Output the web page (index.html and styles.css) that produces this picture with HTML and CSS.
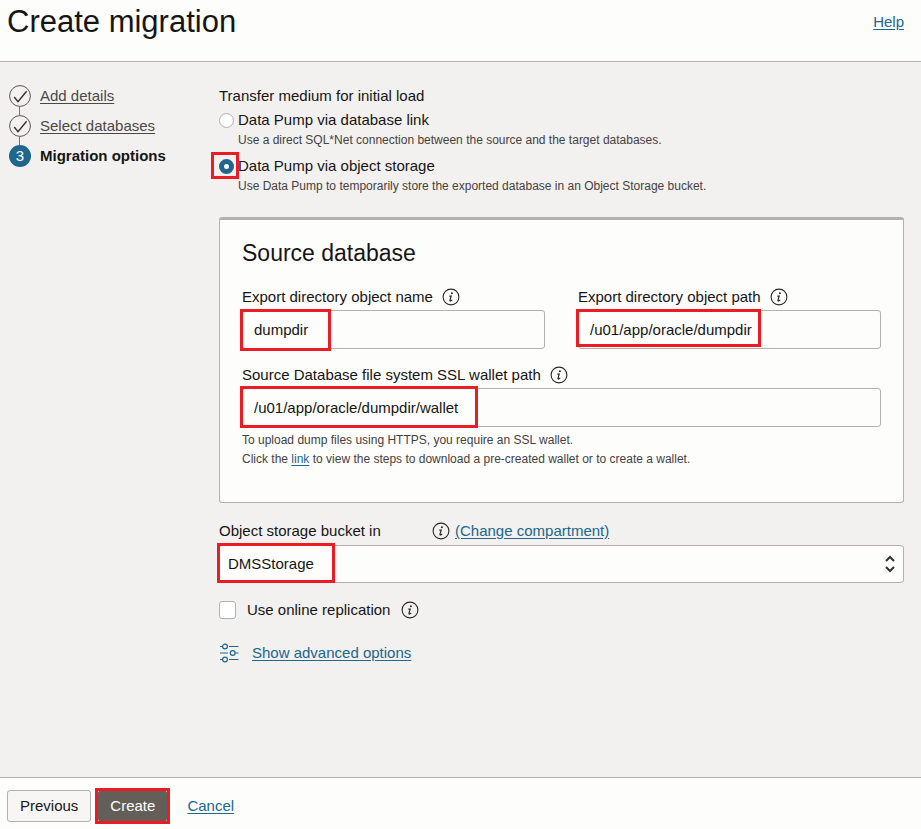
FILE: index.html
```html
<!DOCTYPE html>
<html lang="en">
<head>
<meta charset="utf-8">
<meta name="viewport" content="width=device-width, initial-scale=1">
<title>Create migration</title>
<link rel="stylesheet" href="styles.css">
</head>
<body>
<svg class="symbols" aria-hidden="true">
  <symbol id="info" viewBox="0 0 18 18">
    <circle cx="9" cy="9" r="7.9" fill="none" stroke="currentColor" stroke-width="1.1"/>
    <circle cx="9.9" cy="5.3" r="1" fill="currentColor"/>
    <path d="M7.3 8.1h1.9L8 12.2q-.2 1 .6.8l1.6-1" fill="none" stroke="currentColor" stroke-width="1.2"/>
  </symbol>
  <symbol id="check" viewBox="0 0 22 22">
    <circle cx="11" cy="11" r="10.4" fill="none" stroke="#5b5652" stroke-width="1"/>
    <path d="M5.2 12l3.8 4.6 8.6-10.4" fill="none" stroke="currentColor" stroke-width="1.4"/>
  </symbol>
</svg>
<header class="header">
  <h1 class="title">Create migration</h1>
  <a class="link" href="#">Help</a>
</header>
<main class="main">
  <nav class="steps" aria-label="Steps">
    <ol class="step-list">
      <li class="step"><svg class="step-mark"><use href="#check"/></svg><a class="step-link" href="#">Add details</a></li>
      <li class="step"><svg class="step-mark"><use href="#check"/></svg><a class="step-link" href="#">Select databases</a></li>
      <li class="step current" aria-current="step"><span class="step-mark number">3</span><span>Migration options</span></li>
    </ol>
  </nav>
  <form class="content" id="migration">
    <fieldset class="medium">
      <legend class="legend">Transfer medium for initial load</legend>
      <div class="choice">
        <span class="marker"><input class="radio" type="radio" name="medium" id="dblink"></span>
        <label for="dblink">Data Pump via database link</label>
      </div>
      <p class="hint indent">Use a direct SQL*Net connection between the source and the target databases.</p>
      <div class="choice second">
        <span class="marker"><input class="radio" type="radio" name="medium" id="object" checked><span class="highlight around-radio"></span></span>
        <label for="object">Data Pump via object storage</label>
      </div>
      <p class="hint indent">Use Data Pump to temporarily store the exported database in an Object Storage bucket.</p>
    </fieldset>

    <section class="panel">
      <h2 class="panel-title">Source database</h2>
      <div class="fields">
        <div class="field">
          <div class="label-row"><label for="dirname">Export directory object name</label><svg class="info"><use href="#info"/></svg></div>
          <div class="control"><input class="text" id="dirname" type="text" value="dumpdir"><span class="highlight around-name"></span></div>
        </div>
        <div class="field">
          <div class="label-row"><label for="dirpath">Export directory object path</label><svg class="info"><use href="#info"/></svg></div>
          <div class="control"><input class="text" id="dirpath" type="text" value="/u01/app/oracle/dumpdir"><span class="highlight around-path"></span></div>
        </div>
        <div class="field wide">
          <div class="label-row"><label for="wallet">Source Database file system SSL wallet path</label><svg class="info"><use href="#info"/></svg></div>
          <div class="control"><input class="text" id="wallet" type="text" value="/u01/app/oracle/dumpdir/wallet"><span class="highlight around-wallet"></span></div>
          <p class="hint wallet-hint">To upload dump files using HTTPS, you require an SSL wallet.<br>Click the <a class="link" href="#">link</a> to view the steps to download a pre-created wallet or to create a wallet.</p>
        </div>
      </div>
    </section>

    <div class="bucket">
      <div class="bucket-row">
        <label class="bucket-label" for="bucket">Object storage bucket in</label>
        <svg class="info"><use href="#info"/></svg>
        <a class="link" href="#">(Change compartment)</a>
      </div>
      <div class="control">
        <select class="select" id="bucket"><option>DMSStorage</option></select>
        <svg class="chevrons" viewBox="0 0 12 18" aria-hidden="true"><path d="M2 6l4-4 4 4M2 12l4 4 4-4" fill="none" stroke="currentColor" stroke-width="2"/></svg>
        <span class="highlight around-bucket"></span>
      </div>
    </div>

    <div class="replication">
      <input class="checkbox" type="checkbox" id="online">
      <label for="online">Use online replication</label>
      <svg class="info"><use href="#info"/></svg>
    </div>

    <div class="advanced">
      <svg class="sliders" viewBox="0 0 20 20" aria-hidden="true">
        <g fill="none" stroke="currentColor" stroke-width="1.2">
          <path d="M1 3.5h2.6M10 3.5h9.5M1 10h8M16.5 10h3M1 16.5h2.6M10 16.5h9.5"/>
          <circle cx="6" cy="3.5" r="2.4"/><circle cx="13.7" cy="10" r="2.4"/><circle cx="6" cy="16.5" r="2.4"/>
        </g>
      </svg>
      <a class="link" href="#">Show advanced options</a>
    </div>
  </form>
</main>
<footer class="footer">
  <button class="button" type="button">Previous</button>
  <span class="control"><button class="button primary" type="submit" form="migration">Create</button><span class="highlight around-create"></span></span>
  <a class="link" href="#">Cancel</a>
</footer>
</body>
</html>
```
FILE: styles.css
```css
* {
  box-sizing: border-box;
}

body {
  display: flex;
  flex-direction: column;
  min-height: 100vh;
  margin: 0;
  background: #f2f1f0;
  color: #161513;
  font: 15px/20px "Liberation Sans", Arial, sans-serif;
}

.symbols {
  display: none;
}

input,
select,
button {
  margin: 0;
  font: inherit;
  color: inherit;
}

.link {
  color: #20668d;
  text-underline-offset: 2px;
}

.header {
  display: flex;
  justify-content: space-between;
  padding: 2px 17px 19px 7px;
  border-bottom: 1px solid #b3b0ad;
  background: #fdfdfc;
}

.header .link {
  margin-top: 10px;
}

.title {
  margin: 0;
  font-size: 31px;
  line-height: 40px;
  font-weight: 400;
}

.main {
  display: flex;
  flex: 1;
  padding: 23px 17px 24px 9px;
}

.steps {
  flex: none;
  width: 210px;
}

.step-list {
  display: grid;
  gap: 8px;
  margin: 0;
  padding: 0;
  list-style: none;
}

.step {
  position: relative;
  display: flex;
  align-items: center;
  gap: 9px;
}

.step + .step::before {
  content: "";
  position: absolute;
  left: 10px;
  top: -8px;
  width: 1px;
  height: 8px;
  background: #78736f;
}

.step-mark {
  width: 22px;
  height: 22px;
  color: #33302d;
}

.step-link {
  color: #4c4845;
  text-underline-offset: 2px;
}

.number {
  border-radius: 50%;
  background: #20668d;
  color: #fff;
  font-weight: 400;
  line-height: 22px;
  text-align: center;
}

.current {
  font-weight: 700;
}

.content {
  flex: 1;
  min-width: 0;
}

.medium {
  margin: 0;
  padding: 1px 0 0;
  border: 0;
}

.legend {
  margin-bottom: 3px;
  padding: 1px 0 0;
}

.choice {
  display: flex;
  align-items: center;
  gap: 4px;
}

.second {
  margin-top: 6px;
}

.marker {
  position: relative;
  display: flex;
}

.radio {
  appearance: none;
  width: 15px;
  height: 15px;
  border: 1px solid #b3b0ad;
  border-radius: 50%;
  background: #fff;
}

.radio:checked {
  border: 5px solid #20668d;
}

.hint {
  margin: 0;
  color: #45413e;
  font-size: 12px;
  line-height: 19px;
}

.indent {
  padding-left: 19px;
  line-height: 20px;
}

.highlight {
  position: absolute;
  border: 3px solid #ed1c24;
  pointer-events: none;
}

.around-radio {
  inset: -7px -5px -5px -8px;
}

.panel {
  margin-top: 21px;
  padding: 18px 22px 33px;
  border: 1px solid #b3b0ad;
  border-top-width: 3px;
  border-radius: 3px;
  background: #fdfdfc;
}

.panel-title {
  margin: 0 0 19px;
  font-size: 23px;
  line-height: 30px;
  font-weight: 400;
}

.fields {
  display: grid;
  grid-template-columns: 1fr 1fr;
  gap: 16px 33px;
}

.wide {
  grid-column: 1 / -1;
}

.label-row {
  display: flex;
  align-items: center;
  gap: 9px;
  margin-bottom: 3px;
}

.info {
  flex: none;
  width: 18px;
  height: 18px;
  color: #2b2825;
}

.control {
  position: relative;
  display: flex;
}

.text,
.select {
  width: 100%;
  height: 39px;
  padding: 0 11px;
  border: 1px solid #b3b0ad;
  border-radius: 3px;
  background: #fdfdfc;
}

.around-name {
  left: -2px;
  top: -1px;
  width: 91px;
  height: 42px;
}

.around-path {
  left: -2px;
  top: -1px;
  width: 185px;
  height: 38px;
}

.around-wallet {
  left: -2px;
  top: -2px;
  width: 238px;
  height: 42px;
}

.wallet-hint {
  margin-top: 4px;
}

.bucket {
  margin-top: 18px;
}

.bucket-row {
  display: flex;
  align-items: center;
  gap: 5px;
  margin-bottom: 4px;
}

.bucket-label {
  width: 208px;
}

.select {
  appearance: none;
  height: 38px;
  padding: 0 32px 0 8px;
}

.chevrons {
  position: absolute;
  right: 8px;
  top: 10px;
  width: 12px;
  height: 18px;
  color: #33302d;
  pointer-events: none;
}

.around-bucket {
  left: -2px;
  top: -2px;
  width: 118px;
  height: 40px;
}

.replication {
  display: flex;
  align-items: center;
  gap: 11px;
  margin-top: 17px;
}

.checkbox {
  appearance: none;
  width: 17px;
  height: 18px;
  border: 1px solid #b3b0ad;
  border-radius: 3px;
  background: #fff;
}

.checkbox:checked {
  background: #20668d;
}

.advanced {
  display: flex;
  align-items: center;
  gap: 13px;
  margin-top: 23px;
}

.sliders {
  width: 20px;
  height: 20px;
  color: #20668d;
}

.footer {
  display: flex;
  align-items: center;
  padding: 12px 7px 7px;
  border-top: 1px solid #b3b0ad;
  background: #fdfdfc;
}

.footer .control {
  margin: 0 20px 0 7px;
}

.button {
  height: 32px;
  padding: 0 12px;
  border: 1px solid #b3b0ad;
  border-radius: 3px;
  background: #f7f6f5;
}

.primary {
  padding: 0 11px;
  border-color: #645e59;
  background: #645e59;
  color: #fff;
}

.around-create {
  inset: -2px -3px;
}
```
